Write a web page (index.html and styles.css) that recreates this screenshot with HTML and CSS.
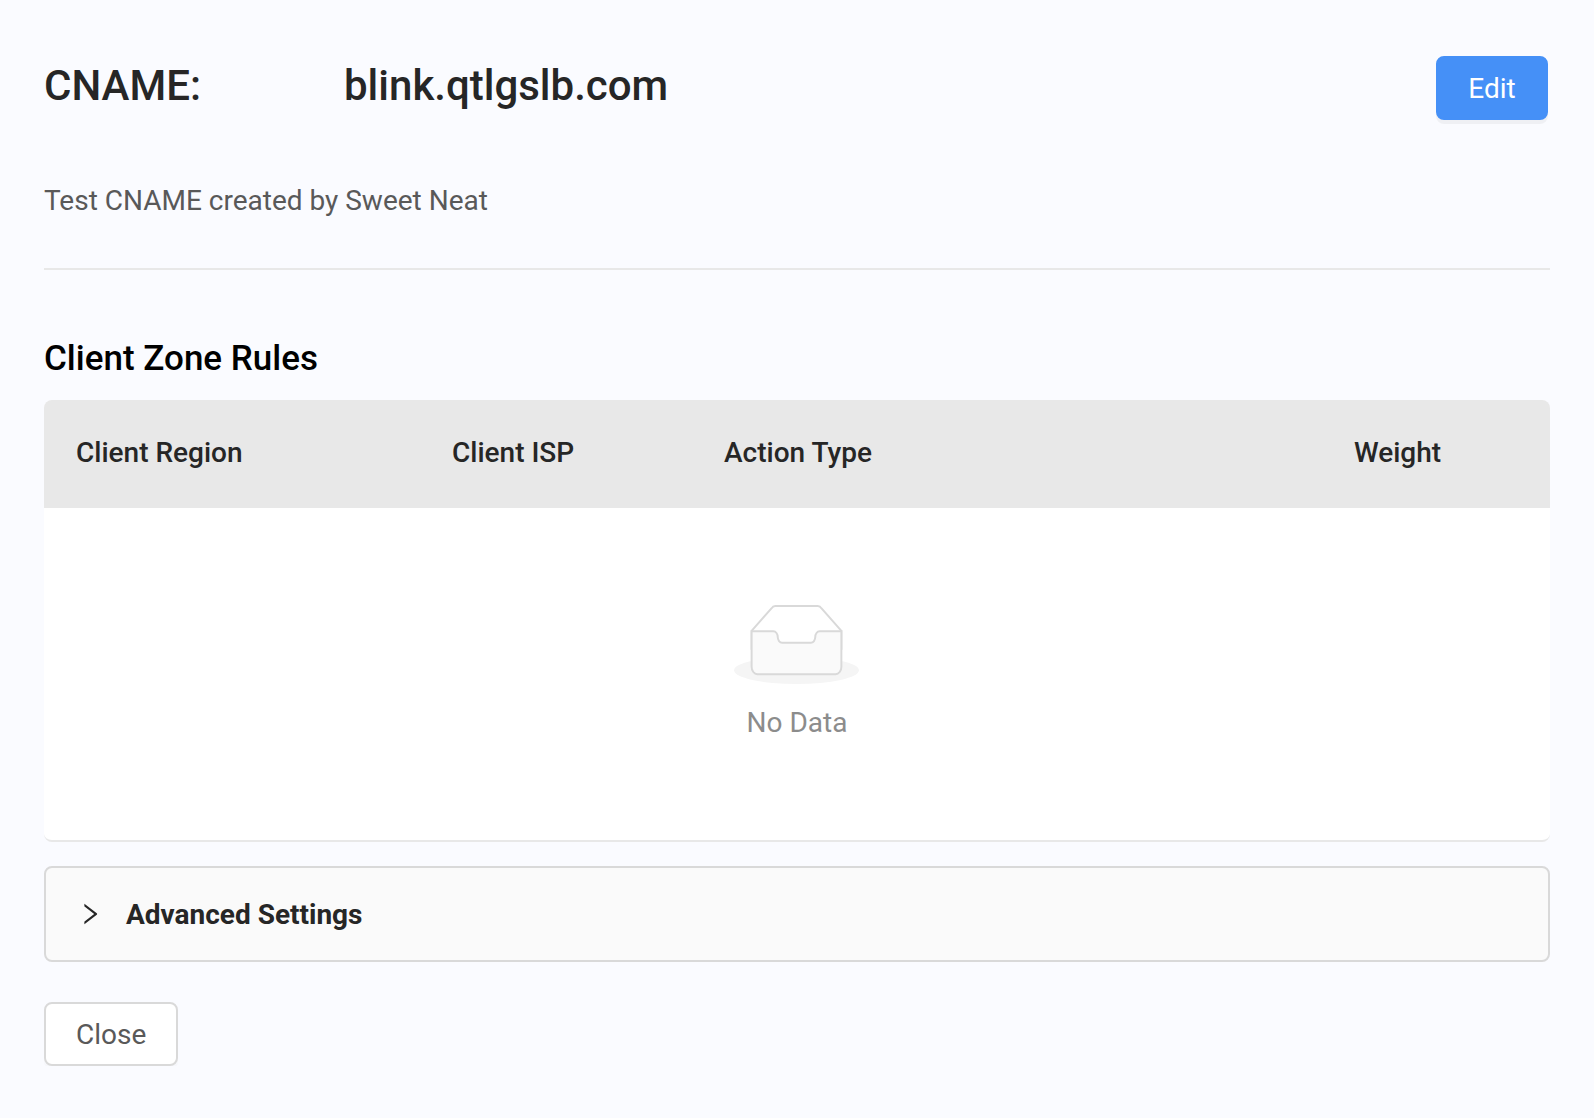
FILE: index.html
```html
<!DOCTYPE html>
<html lang="en">
<head>
<meta charset="utf-8">
<title>CNAME details</title>
<link rel="stylesheet" href="styles.css">
</head>
<body>
<main class="page">
  <header class="header">
    <h1 class="title"><span class="title-label">CNAME:</span><span class="title-value">blink.qtlgslb.com</span></h1>
    <button class="btn btn-primary" type="button">Edit</button>
  </header>
  <p class="description">Test CNAME created by Sweet Neat</p>
  <hr class="divider">
  <h2 class="section-title">Client Zone Rules</h2>
  <section class="table">
    <div class="table-head">
      <span class="th">Client Region</span>
      <span class="th">Client ISP</span>
      <span class="th">Action Type</span>
      <span class="th">Weight</span>
    </div>
    <div class="empty">
      <svg class="empty-image" viewBox="0 0 64 41" aria-hidden="true">
        <g transform="translate(0 1)" fill="none" fill-rule="evenodd">
          <ellipse fill="#f5f5f5" cx="32" cy="33" rx="32" ry="7"/>
          <g fill-rule="nonzero" stroke="#d9d9d9">
            <path d="M55 12.76L44.854 1.258C44.367.474 43.656 0 42.907 0H21.093c-.749 0-1.46.474-1.947 1.257L9 12.761V22h46v-9.24z"/>
            <path d="M41.613 15.931c0-1.605.994-2.93 2.227-2.931H55v18.137C55 33.26 53.68 35 52.05 35h-40.1C10.32 35 9 33.259 9 31.137V13h11.16c1.233 0 2.227 1.323 2.227 2.928v.022c0 1.605 1.005 2.901 2.237 2.901h14.752c1.232 0 2.237-1.308 2.237-2.913v-.007z" fill="#fafafa"/>
          </g>
        </g>
      </svg>
      <p class="empty-text">No Data</p>
    </div>
  </section>
  <section class="collapse">
    <svg class="collapse-arrow" viewBox="64 64 896 896" aria-hidden="true"><path fill="currentColor" d="M765.7 486.8L314.9 134.7A7.97 7.97 0 00302 141v77.3c0 4.9 2.3 9.6 6.1 12.6l360 281.1-360 281.1c-3.9 3-6.1 7.7-6.1 12.6V883c0 6.7 7.7 10.4 12.9 6.3l450.8-352.1a31.96 31.96 0 000-50.4z"/></svg>
    <span class="collapse-label">Advanced Settings</span>
  </section>
  <button class="btn btn-default" type="button">Close</button>
</main>
</body>
</html>
```
FILE: styles.css
```css
* { box-sizing: border-box; }

body {
  margin: 0;
  background: #fafbff;
  color: #262626;
  font-family: Roboto, "Liberation Sans", sans-serif;
  font-size: 28px;
  line-height: 44px;
}

h1, h2, p { margin: 0; }

.page { padding: 54px 44px 0; }

.header {
  display: flex;
  justify-content: space-between;
  align-items: flex-start;
  padding-right: 2px;
}

.title {
  display: flex;
  font-size: 42px;
  font-weight: 500;
  line-height: 64px;
}

.title-label { width: 300px; }

.btn {
  display: block;
  height: 64px;
  padding: 1px 30px 0;
  border: 2px solid #d9d9d9;
  border-radius: 8px;
  font: inherit;
  line-height: 59px;
}

.btn-primary {
  width: 112px;
  margin-top: 2px;
  border-color: #4590f7;
  background: #4590f7;
  color: #fff;
  box-shadow: 0 4px 0 rgba(0, 0, 0, 0.045);
}

.btn-default {
  width: 134px;
  margin-top: 40px;
  background: #fff;
  color: #595959;
  box-shadow: 0 4px 0 rgba(0, 0, 0, 0.016);
}

.description {
  margin-top: 59px;
  color: #595959;
}

.divider {
  height: 2px;
  margin: 45px 0 0;
  border: 0;
  background: #e8e8e8;
}

.section-title {
  margin-top: 67px;
  color: #000;
  font-size: 35px;
  font-weight: 500;
}

.table {
  height: 442px;
  margin-top: 19px;
  overflow: hidden;
  border-bottom: 2px solid #e8e8e8;
  border-radius: 8px;
  background: #fff;
}

.table-head {
  display: grid;
  grid-template-columns: 376px 272px 630px 1fr;
  height: 108px;
  padding-top: 31px;
  background: #e8e8e8;
  font-weight: 500;
}

.th { padding-left: 32px; }

.empty {
  display: flex;
  flex-direction: column;
  align-items: center;
  padding-top: 96px;
}

.empty-image {
  display: block;
  width: 125px;
  height: 80px;
  margin: 0 1px 17px 0;
}

.empty-text { color: #8c8c8c; }

.collapse {
  display: flex;
  align-items: center;
  gap: 24px;
  height: 96px;
  margin-top: 24px;
  padding: 0 32px;
  border: 2px solid #d9d9d9;
  border-radius: 8px;
  background: #fafafa;
}

.collapse-arrow { width: 24px; height: 24px; }

.collapse-label {
  padding-top: 2px;
  font-weight: 700;
}
```
